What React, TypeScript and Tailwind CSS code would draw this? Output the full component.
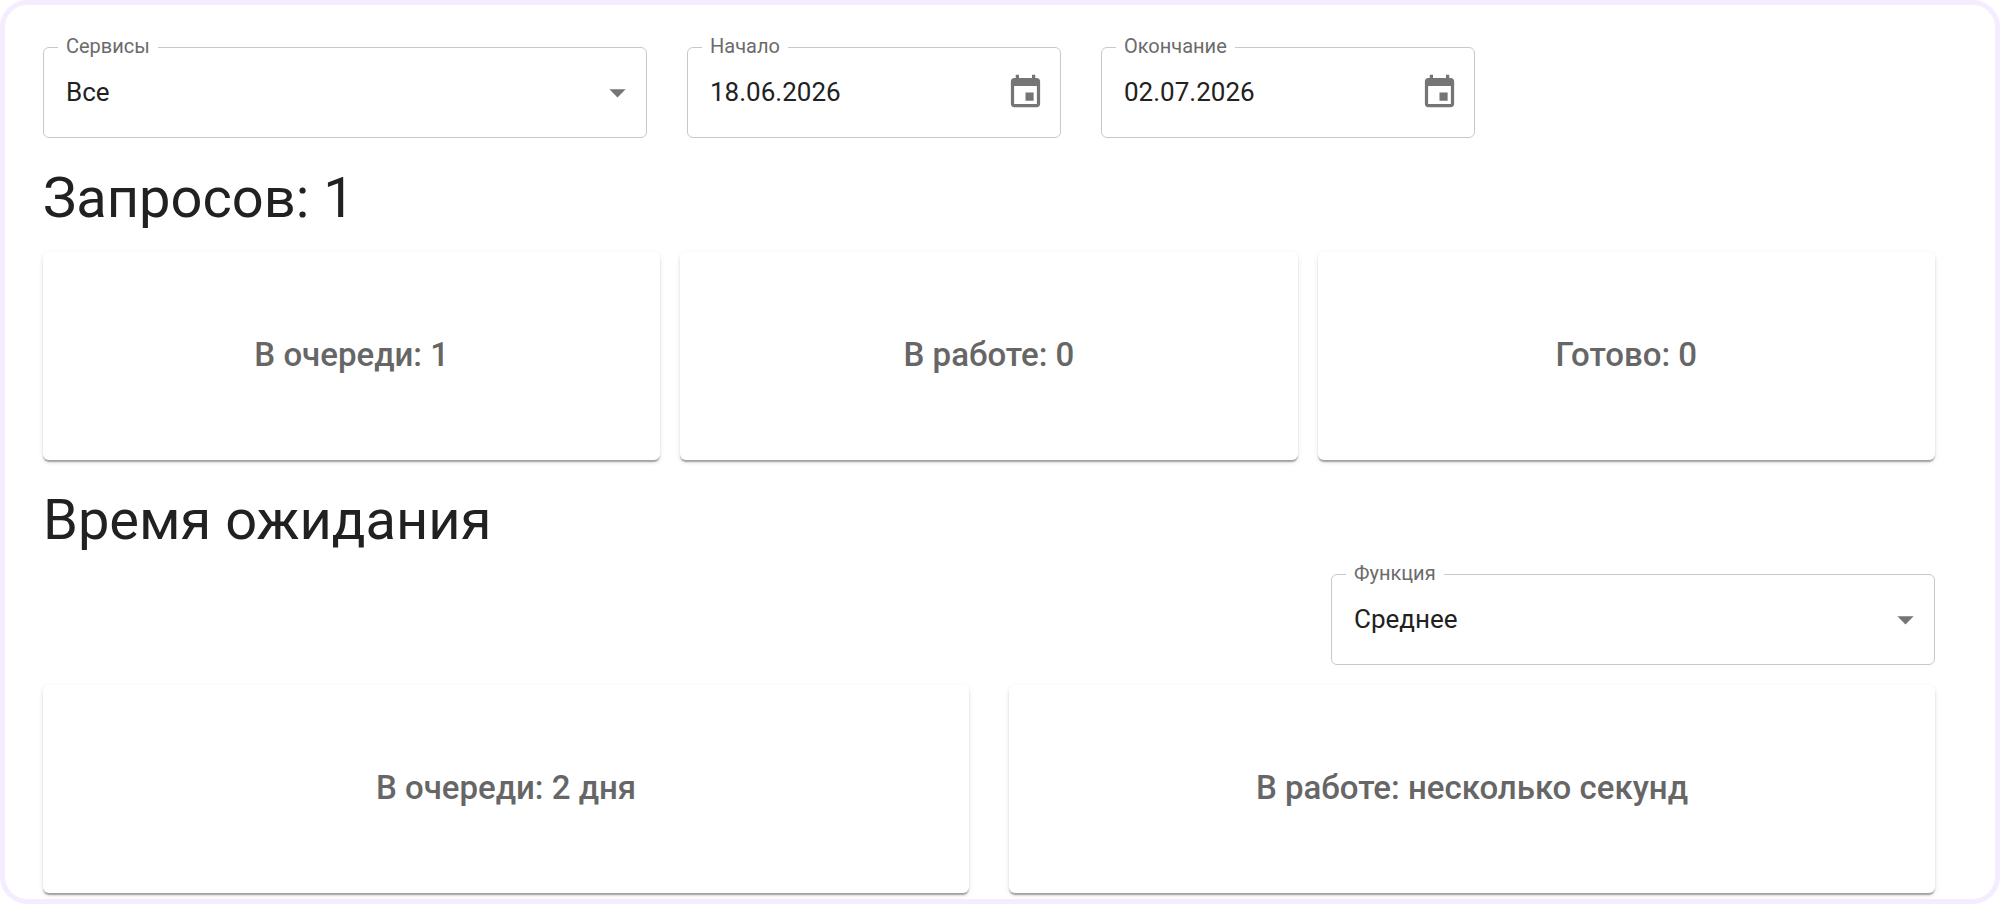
import { useState } from "react";
import { MdArrowDropDown } from "react-icons/md";

type FieldLabelProps = {
	htmlFor: string;
	text: string;
};

const FieldLabel = ({ htmlFor, text }: FieldLabelProps) => (
	<label
		htmlFor={htmlFor}
		className="absolute -top-3.5 left-3.5 bg-white px-2 text-[20px] leading-6 text-[#6b6b6b]"
	>
		{text}
	</label>
);

type SelectFieldProps = {
	id: string;
	label: string;
	options: string[];
};

const SelectField = ({ id, label, options }: SelectFieldProps) => {
	const [value, setValue] = useState(options[0]);

	return (
		<div className="relative flex h-[91px] items-center rounded-md border border-[#c8c8c8]">
			<FieldLabel htmlFor={id} text={label} />
			<select
				id={id}
				value={value}
				onChange={(e) => setValue(e.target.value)}
				className="h-full w-full appearance-none rounded-md bg-transparent pr-14 pl-[22px] text-[26px] text-[#212121]"
			>
				{options.map((option) => (
					<option key={option} value={option}>
						{option}
					</option>
				))}
			</select>
			<MdArrowDropDown className="pointer-events-none absolute right-[9px] size-[39px] text-[#757575]" />
		</div>
	);
};

type DateFieldProps = {
	id: string;
	label: string;
	initial: string;
};

const DateField = ({ id, label, initial }: DateFieldProps) => {
	const [value, setValue] = useState(initial);

	return (
		<div className="relative flex h-[91px] w-[374px] items-center rounded-md border border-[#c8c8c8] pr-[15px]">
			<FieldLabel htmlFor={id} text={label} />
			<input
				id={id}
				type="text"
				value={value}
				onChange={(e) => setValue(e.target.value)}
				className="h-full min-w-0 flex-1 bg-transparent pb-0.5 pl-[22px] text-[26px] text-[#212121]"
			/>
			<button type="button" aria-label={`Выбрать дату: ${label}`}>
				<svg
					viewBox="0 0 24 24"
					fill="currentColor"
					className="size-[39px] text-[#757575]"
				>
					<path d="M17 12h-5v5h5v-5zM16 1v2H8V1H6v2H5c-1.11 0-1.99.9-1.99 2L3 19c0 1.1.89 2 2 2h14c1.1 0 2-.9 2-2V5c0-1.1-.9-2-2-2h-1V1h-2zm3 18H5V8h14v11z" />
				</svg>
			</button>
		</div>
	);
};

const SectionTitle = ({ text }: { text: string }) => (
	<h2 className="mt-6 mb-[18px] text-[56px] leading-[72px] text-[#212121]">
		{text}
	</h2>
);

const StatCard = ({ text }: { text: string }) => (
	<div className="flex h-[208px] items-center justify-center rounded-md bg-white pb-0.5 text-[33px] font-medium text-[#666666] shadow-[0_3px_2px_-1px_rgba(0,0,0,0.2),0_2px_1px_0_rgba(0,0,0,0.14),0_2px_5px_0_rgba(0,0,0,0.12)]">
		{text}
	</div>
);

const App = () => {
	return (
		<main className="rounded-[27px] border-[5px] border-[#f5ecff] bg-white pt-[42px] pr-[60px] pb-1.5 pl-[38px] font-['Roboto',sans-serif]">
			<div className="grid grid-cols-3 gap-10">
				<SelectField id="services" label="Сервисы" options={["Все"]} />
				<div className="col-span-2 flex gap-10">
					<DateField id="start" label="Начало" initial="18.06.2026" />
					<DateField id="end" label="Окончание" initial="02.07.2026" />
				</div>
			</div>

			<SectionTitle text="Запросов: 1" />
			<div className="grid grid-cols-3 gap-5">
				<StatCard text="В очереди: 1" />
				<StatCard text="В работе: 0" />
				<StatCard text="Готово: 0" />
			</div>

			<SectionTitle text="Время ожидания" />
			<div className="mb-5 grid grid-cols-3 gap-10">
				<div className="col-start-3">
					<SelectField id="aggregate" label="Функция" options={["Среднее"]} />
				</div>
			</div>
			<div className="grid grid-cols-2 gap-10">
				<StatCard text="В очереди: 2 дня" />
				<StatCard text="В работе: несколько секунд" />
			</div>
		</main>
	);
};

export default App;
